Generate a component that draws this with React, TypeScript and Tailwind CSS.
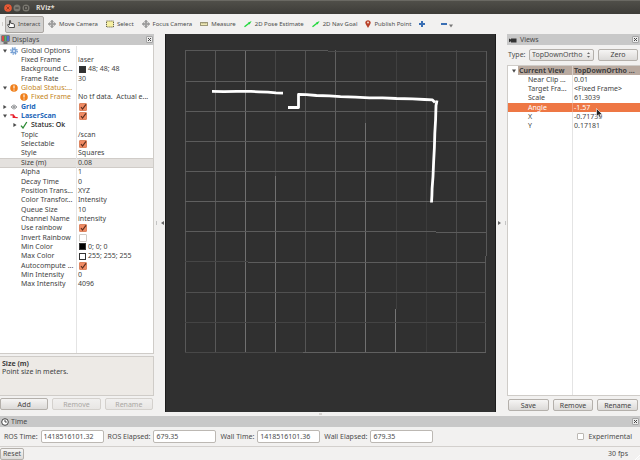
import React from "react";

type Mark = "gear" | "warn" | "grid" | "laser" | "check";
type Prop = {
  name: string;
  value?: string;
  mark?: Mark;
  arrow?: "open" | "closed";
  level?: number;
  tone?: string;
  checked?: boolean;
  swatch?: string;
  selected?: boolean;
};

const displays: Prop[] = [
  { name: "Global Options", mark: "gear", arrow: "open", level: 0 },
  { name: "Fixed Frame", value: "laser" },
  { name: "Background C...", value: "48; 48; 48", swatch: "bg-[#303030]" },
  { name: "Frame Rate", value: "30" },
  { name: "Global Status:...", mark: "warn", arrow: "open", level: 0, tone: "text-[#c4861c]" },
  { name: "Fixed Frame", value: "No tf data.  Actual e...", mark: "warn", level: 1, tone: "text-[#c4861c]" },
  { name: "Grid", mark: "grid", arrow: "closed", level: 0, tone: "font-bold text-[#1f68ba]", checked: true },
  { name: "LaserScan", mark: "laser", arrow: "open", level: 0, tone: "font-bold text-[#1f68ba]", checked: true },
  { name: "Status: Ok", mark: "check", arrow: "closed", level: 1, tone: "font-medium text-[#222]" },
  { name: "Topic", value: "/scan" },
  { name: "Selectable", checked: true },
  { name: "Style", value: "Squares" },
  { name: "Size (m)", value: "0.08", selected: true },
  { name: "Alpha", value: "1" },
  { name: "Decay Time", value: "0" },
  { name: "Position Trans...", value: "XYZ" },
  { name: "Color Transfor...", value: "Intensity" },
  { name: "Queue Size", value: "10" },
  { name: "Channel Name", value: "intensity" },
  { name: "Use rainbow", checked: true },
  { name: "Invert Rainbow", checked: false },
  { name: "Min Color", value: "0; 0; 0", swatch: "bg-black" },
  { name: "Max Color", value: "255; 255; 255", swatch: "bg-white" },
  { name: "Autocompute ...", checked: true },
  { name: "Min Intensity", value: "0" },
  { name: "Max Intensity", value: "4096" },
];

const views: Prop[] = [
  { name: "Near Clip ...", value: "0.01" },
  { name: "Target Fra...", value: "<Fixed Frame>" },
  { name: "Scale", value: "61.3039" },
  { name: "Angle", value: "-1.57", selected: true },
  { name: "X", value: "-0.71739" },
  { name: "Y", value: "0.17181" },
];

function MarkIcon({ mark }: { mark: Mark }) {
  return (
    <svg viewBox="0 0 8 8" className="size-2 shrink-0" aria-hidden="true">
      {mark === "gear" && (
        <>
          <circle cx="4" cy="4" r="3.2" fill="none" stroke="#5d8fcc" strokeWidth="1.2" strokeDasharray="1.5 1" />
          <circle cx="4" cy="4" r="2" fill="#a9c6ea" stroke="#5d8fcc" strokeWidth="1" />
          <circle cx="4" cy="4" r="0.8" fill="#fff" />
        </>
      )}
      {mark === "warn" && (
        <>
          <circle cx="4" cy="4" r="3.8" fill="#f0801c" />
          <path d="M4 1.6v2.9M4 5.4v1" stroke="#fff" strokeWidth="1.1" />
        </>
      )}
      {mark === "grid" && (
        <path d="M1 4l3-2.2 3 2.2-3 2.2zM2.5 2.900l3 2.200M5.500 2.900l-3 2.200" fill="none" stroke="#6a6d70" strokeWidth="0.7" />
      )}
      {mark === "laser" && (
        <path d="M0.3 2.800h2.900v2.600h1.500l3 0.300M3.200 2.800l2 2.600" fill="none" stroke="#e8202c" strokeWidth="1.2" />
      )}
      {mark === "check" && <path d="M1 4.6L3 7 6.8 1" fill="none" stroke="#2d8a34" strokeWidth="1.3" />}
    </svg>
  );
}

function Arrow({ dir }: { dir?: "open" | "closed" }) {
  return (
    <svg viewBox="0 0 4 4" className="size-1 shrink-0" aria-hidden="true">
      {dir === "open" && <path d="M0 0.4h4L2 3.8z" fill="#4a4a4a" />}
      {dir === "closed" && <path d="M0.4 0v4L3.6 2z" fill="#4a4a4a" />}
    </svg>
  );
}

function Tick({ checked, label }: { checked: boolean; label: string }) {
  return (
    <span className="grid size-2 shrink-0">
      <input
        type="checkbox"
        defaultChecked={checked}
        aria-label={label}
        className="peer col-start-1 row-start-1 size-2 appearance-none rounded-[1px] border border-[#cfccc8] bg-white checked:border-[#dd8560] checked:bg-[#f08a63]"
      />
      <svg viewBox="0 0 8 8" className="pointer-events-none col-start-1 row-start-1 hidden size-2 peer-checked:block" aria-hidden="true">
        <path d="M2 4L3.500 6 7 1.300" fill="none" stroke="#5c2f20" strokeWidth="1.200" />
      </svg>
    </span>
  );
}

function DisplayRow({ row }: { row: Prop }) {
  const indent = row.level === 0 ? "pl-[3px]" : row.level === 1 ? "pl-[13px]" : "pl-[21px]";
  return (
    <div
      className={`grid min-h-0 grid-cols-[76px_1fr] whitespace-nowrap ${
        row.selected ? "bg-[#e4e1de] shadow-[inset_0_1px_#d0ccc8,inset_0_-1px_#d0ccc8]" : ""
      }`}
    >
      <div className={`flex min-h-0 items-center gap-[3px] ${indent} ${row.tone ?? ""}`}>
        {row.level !== undefined && <Arrow dir={row.arrow} />}
        {row.mark && <MarkIcon mark={row.mark} />}
        <span>{row.name}</span>
      </div>
      <div className="flex min-h-0 items-center gap-0.5 border-l border-[#e4e4e4] pl-px">
        {row.checked !== undefined && (
          <span className="pl-px">
            <Tick checked={row.checked} label={row.name} />
          </span>
        )}
        {row.swatch && <span className={`ml-px size-[7px] shrink-0 border border-[#333] ${row.swatch}`} />}
        {row.value && <span className="whitespace-pre">{row.value}</span>}
      </div>
    </div>
  );
}

function PanelHeader({ icon, title }: { icon: React.ReactNode; title: string }) {
  return (
    <header className="flex h-[11px] shrink-0 items-center gap-0.5 bg-[#c8c8c8] px-px text-[#4a4a4a]">
      {icon}
      <h2 className="flex-1">{title}</h2>
      <button type="button" aria-label={`Close ${title}`} className="grid size-[7px] place-items-center rounded-[1px] border border-[#a5a5a5] bg-[#ececec]">
        <svg viewBox="0 0 5 5" className="size-[5px]" aria-hidden="true">
          <path d="M1 1l3 3M4 1L1 4" stroke="#444" strokeWidth="1" />
        </svg>
      </button>
    </header>
  );
}

function PushButton({ children, disabled }: { children: React.ReactNode; disabled?: boolean }) {
  return (
    <button
      type="button"
      disabled={disabled}
      className="h-3 flex-1 rounded-[2px] border border-[#b4b0ab] bg-linear-to-b from-[#f6f5f4] to-[#dcdad8] text-[#444] disabled:border-[#d4d1cd] disabled:from-[#f1f0ef] disabled:to-[#e8e6e4] disabled:text-[#aaa7a3]"
    >
      {children}
    </button>
  );
}

function ToolButton({ icon, label, active }: { icon: React.ReactNode; label: string; active?: boolean }) {
  return (
    <button
      type="button"
      aria-pressed={active}
      className={`flex h-[17px] items-center gap-[3px] rounded-[2px] border whitespace-nowrap ${
        active ? "border-[#aaa6a2] bg-[#d3d1cf] pr-[3px] pl-px" : "border-transparent px-[3px]"
      }`}
    >
      {icon}
      {label}
    </button>
  );
}

const cross = (
  <svg viewBox="0 0 8 8" className="size-2" aria-hidden="true">
    <path d="M4 0l1.500 1.800h-.9v1.600h1.600v-.9L8 4 6.200 5.500v-.9H4.600v1.600h.9L4 8 2.500 6.200h.9V4.600H1.800v.9L0 4l1.800-1.500v.9h1.600V1.800h-.9z" fill="#9a9a9a" stroke="#888" strokeWidth="0.500" />
  </svg>
);

const greenArrow = (
  <svg viewBox="0 0 8 8" className="size-2" aria-hidden="true">
    <path d="M0.500 6.800L5 3.200" stroke="#22d83c" strokeWidth="1.400" />
    <path d="M3.800 2.800L7.600 1 5.600 4.400z" fill="#22d83c" />
  </svg>
);

function Toolbar() {
  return (
    <nav className="flex h-5 shrink-0 items-center bg-[#f2f1f0] pl-[2px] text-[6px] text-[#4c4c4c]">
      <span className="mr-0.5 h-1 w-px bg-[#d0cdca]" />
      <div className="flex items-center">
        <ToolButton
          active
          label="Interact"
          icon={
            <svg viewBox="0 0 8 8" className="size-2" aria-hidden="true">
              <path d="M2.500 5V1c0-.8 1.100-.8 1.100 0v2.200l3.200.7c.5.2.6.500.6 1V7.500H2.200L.5 4.800c.3-.7 1.200-.5 2 .6" fill="#fff" stroke="#222" strokeWidth="0.800" />
            </svg>
          }
        />
        <ToolButton label="Move Camera" icon={cross} />
        <ToolButton
          label="Select"
          icon={
            <svg viewBox="0 0 8 8" className="size-2" aria-hidden="true">
              <rect x="0.500" y="1" width="7" height="6" fill="#f7f0a2" stroke="#55533a" strokeWidth="0.900" strokeDasharray="1.200 0.800" />
            </svg>
          }
        />
        <ToolButton label="Focus Camera" icon={cross} />
        <ToolButton
          label="Measure"
          icon={
            <svg viewBox="0 0 8 8" className="size-2" aria-hidden="true">
              <rect x="0.400" y="2.600" width="7.200" height="2.800" fill="#eee8b4" stroke="#8a8462" strokeWidth="0.800" />
              <path d="M2.200 2.600V4M4 2.600V4M5.800 2.600V4" stroke="#8a8462" strokeWidth="0.500" />
            </svg>
          }
        />
        <ToolButton label="2D Pose Estimate" icon={greenArrow} />
        <ToolButton label="2D Nav Goal" icon={greenArrow} />
        <ToolButton
          label="Publish Point"
          icon={
            <svg viewBox="0 0 6 8" className="h-2 w-1.5" aria-hidden="true">
              <path d="M3 8L.8 4.200C-.6 2 1 .2 3 .2S6.600 2 5.200 4.200z" fill="#b9412a" />
              <circle cx="3" cy="2.600" r="1" fill="#f3d8cc" />
            </svg>
          }
        />
      </div>
      <div className="ml-[3px] flex items-center gap-3.5">
        <button type="button" aria-label="Add tool" className="grid size-2 place-items-center">
          <svg viewBox="0 0 6 6" className="size-1.5" aria-hidden="true">
            <path d="M3 0v6M0 3h6" stroke="#3a6fb4" strokeWidth="2" />
          </svg>
        </button>
        <button type="button" aria-label="Remove tool">
          <svg viewBox="0 0 14 8" className="h-2 w-3.5" aria-hidden="true">
            <path d="M1 4h6" stroke="#3a6fb4" strokeWidth="2" />
            <path d="M9 4.500h4L11 7.500z" fill="#777" />
          </svg>
        </button>
      </div>
    </nav>
  );
}

/* Grid lines: fixed coordinate, start, end, brightness. */
const verticals: [number, number, number, string][] = [
  [19, 16, 318, "#585858"],
  [49, 16, 318, "#585858"],
  [79, 16, 318, "#707070"],
  [109, 16, 142, "#464646"],
  [109, 142, 318, "#707070"],
  [139, 16, 318, "#555"],
  [169, 16, 318, "#606060"],
  [199, 16, 89, "#404040"],
  [199, 89, 318, "#707070"],
  [230, 16, 275, "#404040"],
  [229, 275, 318, "#747474"],
  [260, 16, 318, "#3c3c3c"],
  [290, 16, 318, "#4c4c4c"],
  [320, 17, 222, "#585858"],
  [319, 222, 318, "#585858"],
];
const horizontals: [number, number, number, string][] = [
  [16, 19, 162, "#585858"],
  [17, 162, 320, "#4c4c4c"],
  [47, 19, 320, "#5c5c5c"],
  [77, 19, 320, "#5c5c5c"],
  [107, 19, 320, "#5c5c5c"],
  [137, 19, 320, "#5c5c5c"],
  [167, 19, 320, "#606060"],
  [197, 19, 270, "#5c5c5c"],
  [198, 270, 320, "#5c5c5c"],
  [227, 19, 82, "#464646"],
  [228, 82, 320, "#5c5c5c"],
  [258, 19, 320, "#505050"],
  [288, 19, 320, "#444"],
  [318, 19, 137, "#484848"],
  [318, 137, 320, "#606060"],
];

function Viewport() {
  return (
    <main className="min-w-0 flex-1 overflow-hidden border-x border-[#1c1c1c] bg-[#303030]">
      <svg viewBox="0 0 329 378" className="h-full w-full" aria-label="Laser scan over grid">
        <g fill="none">
          {verticals.map(([x, a, b, c]) => (
            <path key={`v${x}-${a}`} d={`M${x + 0.5} ${a}V${b}`} stroke={c} />
          ))}
          {horizontals.map(([y, a, b, c]) => (
            <path key={`h${y}-${a}`} d={`M${a} ${y + 0.5}H${b}`} stroke={c} />
          ))}
        </g>
        <g stroke="#fff" strokeWidth="2.800" fill="none" strokeLinejoin="round">
          <path d="M46 57.300l12 .3 13-.3 14 .1 8 .4 9 .4 8 .7 7 .3" />
          <path d="M122 73.500h10.500V60.500l8 .1 10 .9 13 .4 11 .8 15 .4 14 .7 13 .1 14 .6 16 .3 12 .7 8 .4 2.500 2.500" />
          <path d="M271 66.500l-1 5-.4 14-.8 14-.4 14-.8 15-.6 14-.9 12-.2 7-.4 7" />
        </g>
      </svg>
    </main>
  );
}

function Splitter({ flip }: { flip?: boolean }) {
  return (
    <div className="flex w-[11px] shrink-0 items-center justify-center gap-1">
      <span className={`h-1 w-px bg-[#c4c4c4] ${flip ? "order-2" : ""}`} />
      <svg viewBox="0 0 3 4" className="h-1 w-[3px]" aria-hidden="true">
        <path d={flip ? "M0 0v4l3-2z" : "M3 0v4L0 2z"} fill="#666" />
      </svg>
    </div>
  );
}

function DisplaysPanel() {
  return (
    <section className="flex w-[154px] shrink-0 flex-col">
      <PanelHeader
        title="Displays"
        icon={
          <svg viewBox="0 0 9 9" className="size-[9px]" aria-hidden="true">
            <rect x="0.500" y="0.500" width="8" height="6" fill="#333" />
            <rect x="1" y="1" width="2.400" height="5" fill="#d84a4a" />
            <rect x="3.400" y="1" width="2.300" height="5" fill="#58b868" />
            <rect x="5.700" y="1" width="2.300" height="5" fill="#5a6fd0" />
            <path d="M2.500 8h4" stroke="#333" strokeWidth="1.200" />
          </svg>
        }
      />
      <div className="flex flex-1 flex-col border-r border-b border-[#cfccc8] bg-white pt-px">
        <div className="grid h-[243px] auto-rows-fr leading-[8px] text-[#3f3f3f]">
          {displays.map((row, i) => (
            <DisplayRow key={i} row={row} />
          ))}
        </div>
        <div className="grid flex-1 grid-cols-[76px_1fr]">
          <div />
          <div className="border-l border-[#e4e4e4]" />
        </div>
      </div>
      <div className="mt-[2px] h-10 border border-l-0 border-[#cfccc8] bg-[#edeae6] px-0.5 pt-[3px] leading-[8px] text-[#3f3f3f]">
        <h3 className="font-bold">Size (m)</h3>
        <p>Point size in meters.</p>
      </div>
      <div className="flex gap-1 pt-[2px] pr-px pb-[2px]">
        <PushButton>Add</PushButton>
        <PushButton disabled>Remove</PushButton>
        <PushButton disabled>Rename</PushButton>
      </div>
    </section>
  );
}

function ViewsPanel() {
  return (
    <section className="flex w-[133px] shrink-0 flex-col">
      <PanelHeader
        title="Views"
        icon={
          <svg viewBox="0 0 10 8" className="h-2 w-2.5" aria-hidden="true">
            <path d="M1 2.500l2 1v-1h5.500v4H3V5.300l-2 1z" fill="#333" />
          </svg>
        }
      />
      <div className="flex h-5 items-center pr-0.5 pb-px pl-px">
        <label htmlFor="view-type" className="w-[21px]">Type:</label>
        <div className="grid w-[65px] items-center">
          <select id="view-type" className="col-start-1 row-start-1 h-3 appearance-none rounded-[2px] border border-[#b4b0ab] bg-linear-to-b from-[#f6f5f4] to-[#e2e0de] pl-0.5 leading-[8px]">
            <option>TopDownOrtho</option>
          </select>
          <svg viewBox="0 0 3 6" className="pointer-events-none col-start-1 row-start-1 mr-1 h-1.5 w-[3px] justify-self-end" aria-hidden="true">
            <path d="M0 2L1.500 0.300 3 2zM0 4l1.500 1.700L3 4z" fill="#666" />
          </svg>
        </div>
        <div className="flex flex-1 pl-1">
          <PushButton>Zero</PushButton>
        </div>
      </div>
      <div className="flex flex-1 flex-col border border-r-0 border-[#cfccc8] bg-white">
        <div className="grid h-[65px] auto-rows-fr leading-[8px] whitespace-nowrap text-[#3f3f3f]">
          <div className="grid min-h-0 grid-cols-[64px_1fr] font-bold">
            <div className="flex min-h-0 items-center gap-0.5 pl-1">
              <Arrow dir="open" />
              <span className="flex h-full flex-1 items-center bg-[#b9aaa0] pl-px">Current View</span>
            </div>
            <span className="flex min-h-0 items-center border-l border-[#d8cec8] bg-[#b9aaa0] pl-px">TopDownOrtho ...</span>
          </div>
          {views.map((row) => (
            <div key={row.name} className={`grid min-h-0 grid-cols-[64px_1fr] ${row.selected ? "bg-[#ee7744] text-white" : ""}`}>
              <span className="flex min-h-0 items-center pl-5">{row.name}</span>
              <span className={`flex min-h-0 items-center border-l pl-px ${row.selected ? "border-[#f39a74]" : "border-[#e4e4e4]"}`}>{row.value}</span>
            </div>
          ))}
        </div>
        <div className="grid flex-1 grid-cols-[64px_1fr]">
          <div />
          <div className="border-l border-[#e4e4e4]" />
        </div>
      </div>
      <div className="flex gap-1 pt-[3px] pr-0.5 pb-px pl-px">
        <PushButton>Save</PushButton>
        <PushButton>Remove</PushButton>
        <PushButton>Rename</PushButton>
      </div>
    </section>
  );
}

function TimeField({ id, label, value }: { id: string; label: string; value: string }) {
  return (
    <div className="flex items-center gap-[3px]">
      <label htmlFor={id}>{label}</label>
      <input id={id} readOnly defaultValue={value} className="h-[13px] w-[63px] rounded-[2px] border border-[#bcb8b3] bg-white px-0.5" />
    </div>
  );
}

export default function App() {
  return (
    <div className="relative flex h-screen flex-col overflow-hidden bg-[#f2f1f0] font-['Noto_Sans',sans-serif] text-[7px] leading-[9px] text-[#4c4c4c]">
      <header className="flex h-3.5 shrink-0 items-center gap-px border-t border-[#6a6963] bg-linear-to-b from-[#504f49] to-[#3d3c38] pl-1">
        <button type="button" aria-label="Close" className="size-2">
          <svg viewBox="0 0 8 8" className="size-2" aria-hidden="true">
            <circle cx="4" cy="4" r="3.800" fill="#ea5a35" />
            <path d="M2.500 2.500l3 3M5.500 2.500l-3 3" stroke="#8f3a22" strokeWidth="0.900" />
          </svg>
        </button>
        <button type="button" aria-label="Minimize" className="size-2">
          <svg viewBox="0 0 8 8" className="size-2" aria-hidden="true">
            <circle cx="4" cy="4" r="3.500" fill="#7a7870" />
            <path d="M2.300 4h3.400" stroke="#3c3b37" strokeWidth="1" />
          </svg>
        </button>
        <button type="button" aria-label="Maximize" className="size-2">
          <svg viewBox="0 0 8 8" className="size-2" aria-hidden="true">
            <circle cx="4" cy="4" r="3.500" fill="#7a7870" />
            <rect x="2.500" y="2.700" width="3" height="2.600" fill="none" stroke="#3c3b37" strokeWidth="0.800" />
          </svg>
        </button>
        <h1 className="pl-[5px] font-bold text-[#dfdbd2]">RViz*</h1>
      </header>
      <Toolbar />
      <div className="flex min-h-0 flex-1">
        <DisplaysPanel />
        <Splitter />
        <Viewport />
        <Splitter flip />
        <ViewsPanel />
      </div>
      <div className="flex h-1 shrink-0 items-center justify-center">
        <span className="h-0.5 w-[3px] bg-[#d6d3d0]" />
      </div>
      <footer className="shrink-0">
        <PanelHeader
          title="Time"
          icon={
            <svg viewBox="0 0 8 8" className="size-2" aria-hidden="true">
              <circle cx="4" cy="4" r="3.300" fill="#fff" stroke="#333" strokeWidth="0.900" />
              <path d="M4 1.800V4h1.800" fill="none" stroke="#333" strokeWidth="0.900" />
            </svg>
          }
        />
        <div className="flex h-5 items-center gap-1 border-b border-[#d3d0cd] pr-2 pl-1">
          <TimeField id="ros-time" label="ROS Time:" value="1418516101.32" />
          <TimeField id="ros-elapsed" label="ROS Elapsed:" value="679.35" />
          <TimeField id="wall-time" label="Wall Time:" value="1418516101.36" />
          <TimeField id="wall-elapsed" label="Wall Elapsed:" value="679.35" />
          <label className="ml-auto flex items-center gap-1">
            <input type="checkbox" className="size-[7px] appearance-none rounded-[1px] border border-[#bcb8b3] bg-white" />
            Experimental
          </label>
        </div>
        <div className="flex h-[13px] items-center">
          <button type="button" className="h-3 rounded-[2px] border border-[#b4b0ab] bg-linear-to-b from-[#f6f5f4] to-[#dcdad8] px-0.5">Reset</button>
          <span className="ml-auto pr-1.5">30 fps</span>
          <svg viewBox="0 0 6 6" className="size-1.5 self-end" aria-hidden="true">
            <path d="M1 6l5-5M3.500 6L6 3.500" stroke="#fff" strokeWidth="1" />
          </svg>
        </div>
      </footer>
      <svg viewBox="0 0 7 11" className="absolute top-[108px] right-[37px] h-[11px] w-[7px]" aria-label="Pointer">
        <path d="M.5.5v8l1.900-1.700 1.400 3.400 1.400-.6-1.400-3.200h2.600z" fill="#222" stroke="#fff" strokeWidth="0.600" />
      </svg>
    </div>
  );
}
